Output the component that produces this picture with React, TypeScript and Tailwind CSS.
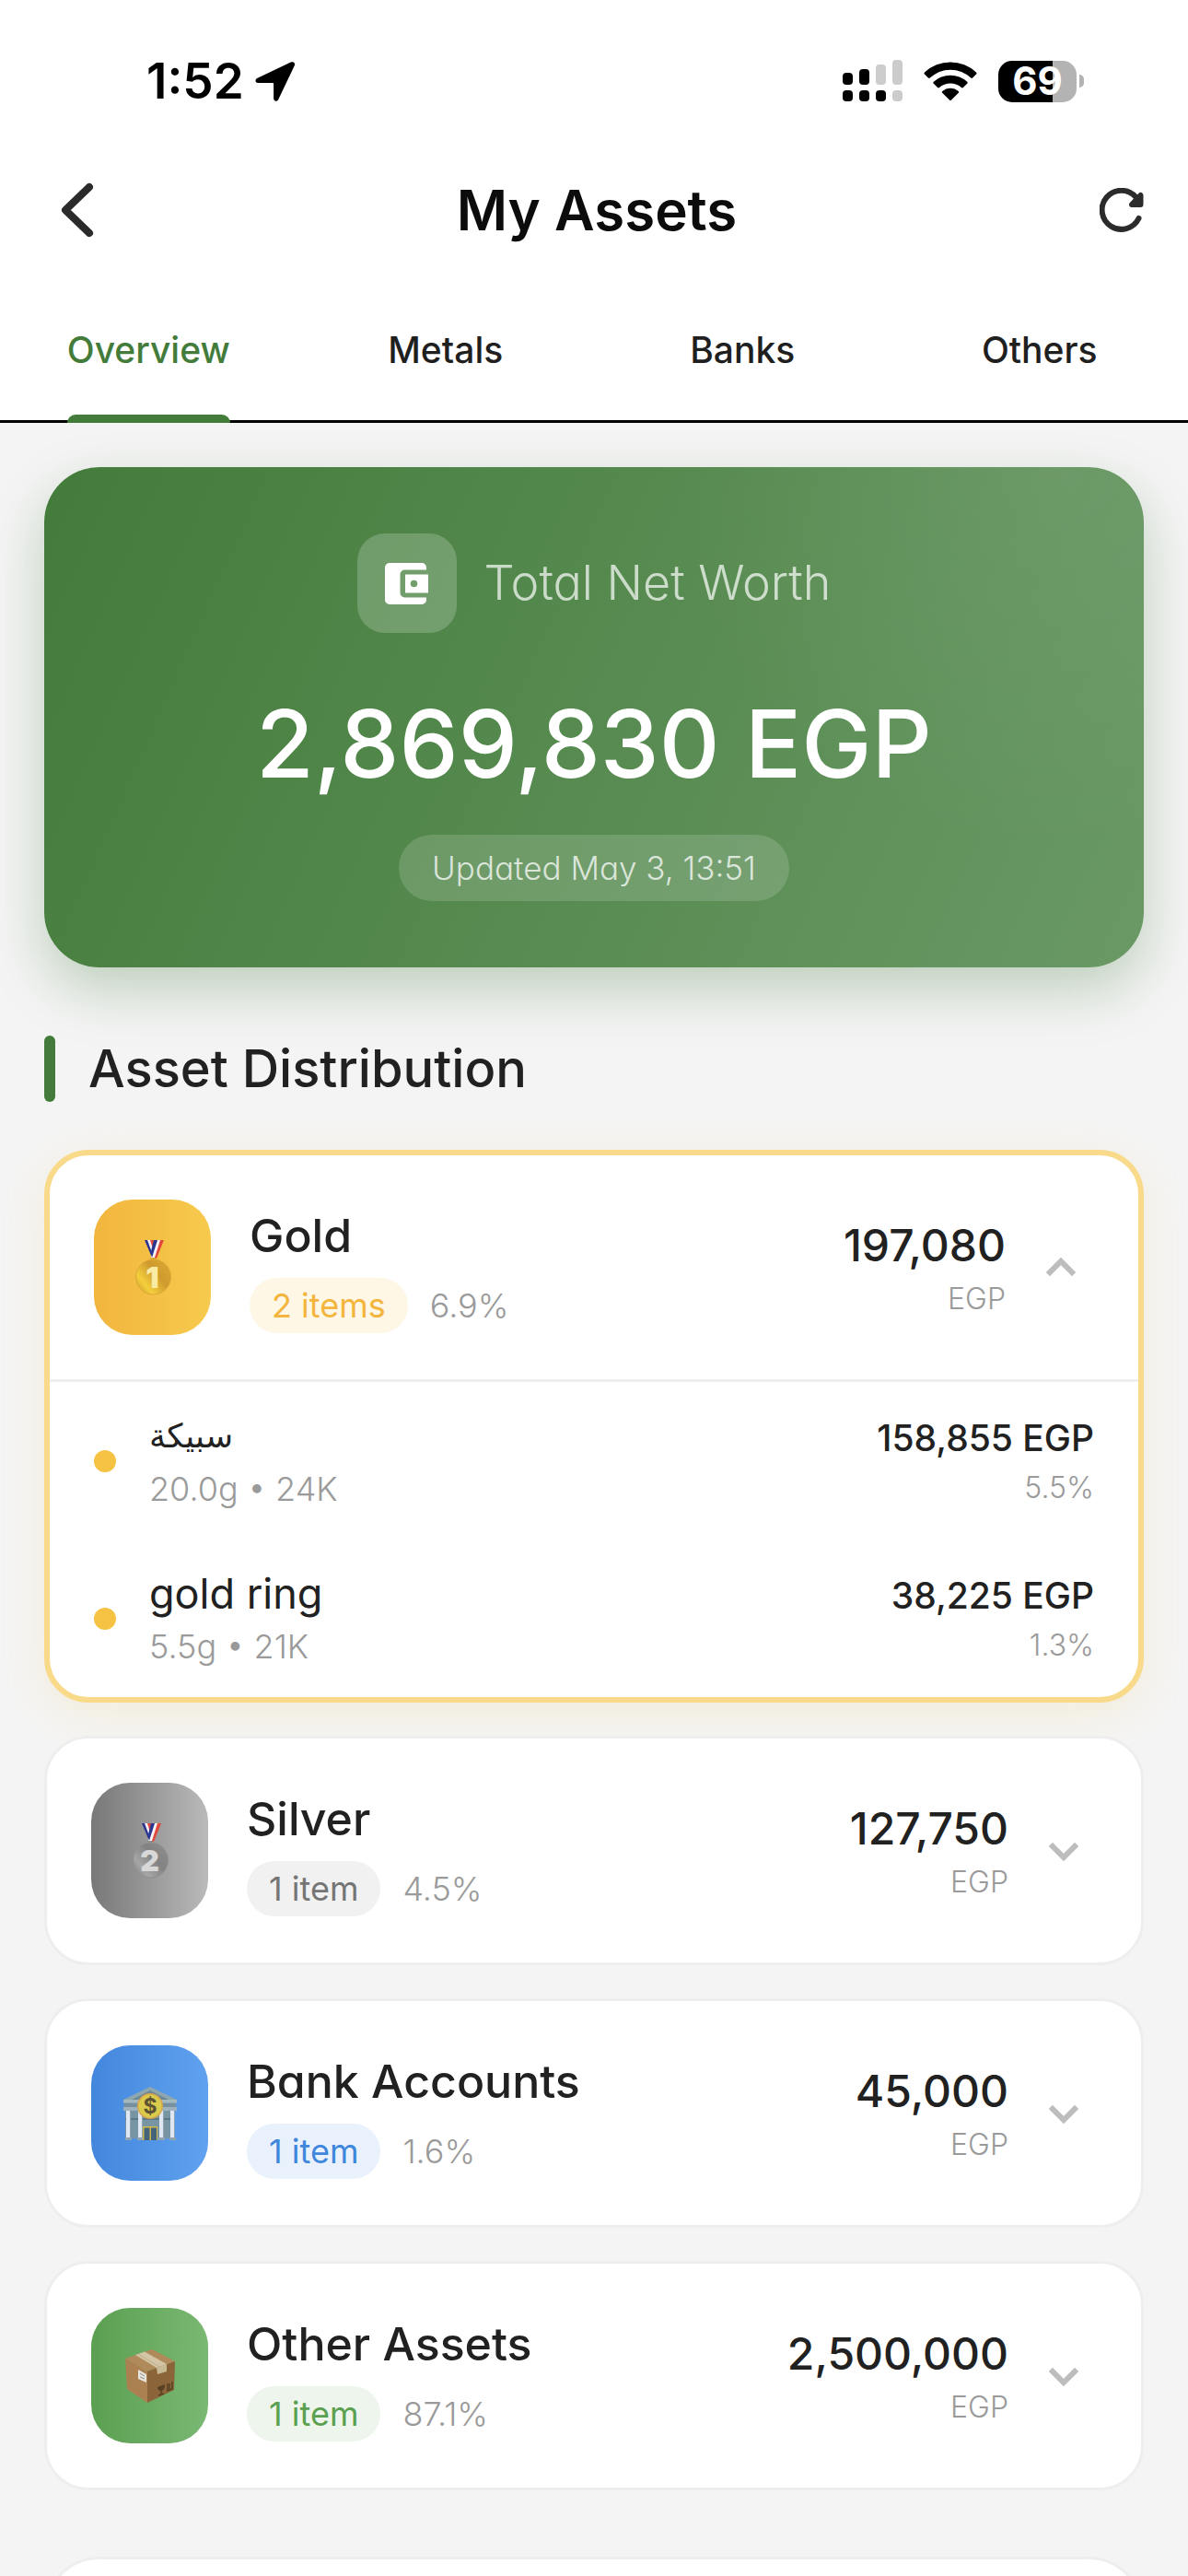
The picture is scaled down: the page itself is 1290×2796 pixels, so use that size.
import type { ReactNode } from "react";

type Holding = { name: string; detail: string; value: string; share: string; arabic?: boolean };
type Asset = {
  name: string;
  count: string;
  share: string;
  value: string;
  tile: string;
  pill: string;
  icon: ReactNode;
  holdings?: Holding[];
};

function Ribbon() {
  return (
    <g>
      <path d="M11 0h6l6 19h-4z" fill="#2a3590" />
      <path d="M14 0h4l5 17-2 2z" fill="#f4f1f4" />
      <path d="M17 0h4l3 11-2 5z" fill="#e2493b" />
      <path d="M32 0h-5l-8 20h5z" fill="#e2493b" />
      <path d="M28 0h-4l-6 19h4z" fill="#f8f5f6" />
      <path d="M25 0h-4l-3 12 1 7z" fill="#2a3590" />
    </g>
  );
}

function Medal({ id, label, light, mid, dark, digit }: { id: string; label: string; light: string; mid: string; dark: string; digit: string }) {
  return (
    <svg viewBox="0 0 40 60" className="h-[60px] w-10" aria-hidden="true">
      <defs>
        <linearGradient id={id} x1="0" y1="0.9" x2="1" y2="0.1">
          <stop offset="0" stopColor={dark} />
          <stop offset="0.25" stopColor={light} />
          <stop offset="0.6" stopColor={dark} />
          <stop offset="1" stopColor={mid} />
        </linearGradient>
      </defs>
      <Ribbon />
      <rect x="17" y="19" width="6" height="4" rx="1" fill={mid} />
      <circle cx="20.500" cy="40" r="19" fill={`url(#${id})`} stroke={mid} strokeWidth="1" />
      <text x="19.500" y="51.500" textAnchor="middle" fontFamily="Inter" fontWeight="900" fontSize="32" fill={digit}>
        {label}
      </text>
    </svg>
  );
}

function BankIcon() {
  return (
    <svg viewBox="0 0 60 60" className="size-[60px]" aria-hidden="true">
      <rect x="3" y="24" width="54" height="33" fill="#7795a3" />
      <rect x="3" y="35" width="54" height="2" fill="#5d7987" />
      <path d="M30 1 59 15v4H1v-4z" fill="#8ea6b0" />
      <path d="M30 5 50 15H10z" fill="#6d8794" />
      <rect x="1" y="15" width="58" height="3" fill="#a4b8c0" />
      <rect x="2" y="19" width="56" height="5" fill="#7690a0" />
      <rect x="1" y="23" width="58" height="4" fill="#9db2bc" />
      {[4, 17, 40, 52].map((x) => (
        <g key={x}>
          <rect x={x} y="27" width="5" height="31" fill="#dfe7f2" />
          <rect x={x + 4} y="27" width="1" height="31" fill="#8fa2b6" />
          <rect x={x - 1} y="56" width="7" height="3" fill="#8fa4b0" />
        </g>
      ))}
      <rect x="22" y="44" width="16" height="15" fill="#d2b94a" />
      <rect x="23.500" y="45.500" width="6" height="13.500" fill="#44647c" />
      <rect x="31" y="45.500" width="6" height="13.500" fill="#44647c" />
      <circle cx="30" cy="22" r="14" fill="#d7a650" />
      <circle cx="30" cy="22" r="12.500" fill="#dbcb4c" />
      <text x="30" y="30" textAnchor="middle" fontFamily="Inter" fontWeight="700" fontSize="23" fill="#5d5335">
        $
      </text>
    </svg>
  );
}

function BoxIcon() {
  return (
    <svg viewBox="0 0 60 60" className="size-[60px]" aria-hidden="true">
      <path d="M3 11 32 1l25 13-30 11z" fill="#b08a5a" />
      <path d="M3 11l24 14v34L5 44z" fill="#ab8152" />
      <path d="M27 25l30-11-1 31-29 14z" fill="#8b6439" />
      <path d="m14 7 10-3.500 24 13.500-11 4z" fill="#d3c5a5" />
      <path d="m17 6 23 14" stroke="#bfae8a" strokeWidth="1" />
      <path d="m37 21 11-4v8l-10 3z" fill="#c8b995" />
      <path d="m17 23 9 5v9l-9-4z" fill="#e6e4dc" />
      <path d="m19 27 5 3m-5 1 5 2" stroke="#8c8f8e" strokeWidth="1" />
      <path d="m38 42 8-3c0 5-2 7-4 7s-4-1-4-4z" fill="#574022" />
      <path d="M42 45v5m-3 1 6-2M49 38v8l5-2v-8m-3 2v6" stroke="#574022" strokeWidth="1.500" fill="none" />
    </svg>
  );
}

const assets: Asset[] = [
  {
    name: "Gold",
    count: "2 items",
    share: "6.9%",
    value: "197,080",
    tile: "from-[#f2b53e] to-[#f6ca4d]",
    pill: "bg-[#fef7e6] text-[#f3b53d]",
    icon: <Medal id="gold" label="1" light="#f4cf3c" mid="#dba935" dark="#cf9a2e" digit="#f9eaa4" />,
    holdings: [
      { name: "سبيكة", detail: "20.0g • 24K", value: "158,855 EGP", share: "5.5%", arabic: true },
      { name: "gold ring", detail: "5.5g • 21K", value: "38,225 EGP", share: "1.3%" },
    ],
  },
  {
    name: "Silver",
    count: "1 item",
    share: "4.5%",
    value: "127,750",
    tile: "from-[#787878] to-[#bababa]",
    pill: "bg-[#f1f1f1] text-[#757575]",
    icon: <Medal id="silver" label="2" light="#a6a6a6" mid="#8f8f8f" dark="#828282" digit="#d8d8d8" />,
  },
  {
    name: "Bank Accounts",
    count: "1 item",
    share: "1.6%",
    value: "45,000",
    tile: "from-[#4387dd] to-[#60a2ef]",
    pill: "bg-[#e9f2fc] text-[#3f86dd]",
    icon: <BankIcon />,
  },
  {
    name: "Other Assets",
    count: "1 item",
    share: "87.1%",
    value: "2,500,000",
    tile: "from-[#5b9f51] to-[#7ab873]",
    pill: "bg-[#edf5ec] text-[#5aa04f]",
    icon: <BoxIcon />,
  },
];

function StatusBar() {
  return (
    <div className="flex h-[156px] items-center justify-between pt-5 pr-[113px] pl-[159px] text-black">
      <div className="flex items-center gap-3">
        <span className="text-[53px] leading-none font-semibold">1:52</span>
        <svg viewBox="0 0 42 42" className="size-11" aria-hidden="true">
          <path d="M37 1.500 2.500 18C-.5 19.500 0 23 3 23h15c.8 0 1.200.4 1.200 1.200V39c0 3.200 3.700 3.700 5 .8L40.800 5c1.200-2.600-1-4.900-3.800-3.500z" />
        </svg>
      </div>
      <div className="flex items-center">
        <svg viewBox="0 0 65 46" className="h-[46px] w-[65px]" aria-hidden="true">
          <g fill="#ccc">
            <rect x="36" y="5" width="11" height="22" rx="4" />
            <rect x="54" width="11" height="27" rx="4" />
            <rect x="54" y="33" width="11" height="12" rx="4" />
          </g>
          <rect y="14" width="11" height="13" rx="4" />
          <rect x="18" y="10" width="11" height="17" rx="4" />
          <rect y="33" width="11" height="12" rx="4" />
          <rect x="18" y="33" width="11" height="12" rx="4" />
          <rect x="36" y="33" width="11" height="12" rx="4" />
        </svg>
        <svg viewBox="0 0 58 43" className="ml-[23px] h-[43px] w-[58px]" aria-hidden="true">
          <path d="M1 11.500a41 41 0 0 1 56 0c.7.700.7 1.300.1 1.900l-4 4.100c-.6.600-1.200.6-1.900 0a32.500 32.500 0 0 0-44.400 0c-.7.600-1.300.6-1.900 0l-4-4.100c-.6-.6-.6-1.200.1-1.900z" />
          <path d="M10.800 21.800a27 27 0 0 1 36.400 0c.7.700.7 1.300 0 1.900l-4.300 4.300c-.6.600-1.200.6-1.900 0a18 18 0 0 0-24 0c-.7.600-1.300.6-1.900 0l-4.300-4.300c-.7-.6-.7-1.200 0-1.900z" />
          <path d="M20.300 32a13 13 0 0 1 17.400 0c.7.700.7 1.200.1 1.800l-8 8c-.6.500-1 .5-1.600 0l-8-8c-.6-.6-.6-1.100.1-1.800z" />
        </svg>
        <div className="ml-[23px] flex items-center gap-[3px]">
          <div className="flex h-[45px] w-[85px] items-center justify-center rounded-[15px] bg-[linear-gradient(90deg,#000_69%,#b3b3b3_69%)] text-[42px] leading-none font-bold text-white">
            69
          </div>
          <div className="h-[14px] w-[5px] rounded-r-full bg-[#b3b3b3]" />
        </div>
      </div>
    </div>
  );
}

function Header() {
  return (
    <div className="flex h-[144px] items-center justify-between pr-12 pl-[66px] text-[#2b2b2b]">
      <button type="button" aria-label="Back">
        <svg viewBox="0 0 36 60" className="h-[60px] w-9" fill="none" stroke="currentColor" strokeWidth="8" strokeLinecap="round" strokeLinejoin="round">
          <path d="M31 5 5 30l26 25" />
        </svg>
      </button>
      <h1 className="text-[60px] leading-none font-semibold text-[#0c0c0c]">My Assets</h1>
      <button type="button" aria-label="Refresh">
        <svg viewBox="0 0 48 48" className="size-12" fill="none" stroke="currentColor" strokeWidth="6" strokeLinecap="round">
          <path d="M42.500 33A21 21 0 1 1 39 9.500l2 2" />
          <path d="M44.500 8v10H35z" strokeLinejoin="round" strokeWidth="6" fill="currentColor" />
        </svg>
      </button>
    </div>
  );
}

function Tabs() {
  return (
    <nav role="tablist" className="grid h-[159px] grid-cols-4 border-b-[3px] border-black text-[39px] font-medium">
      {["Overview", "Metals", "Banks", "Others"].map((tab, i) => (
        <button
          key={tab}
          type="button"
          role="tab"
          aria-selected={i === 0}
          className={
            i === 0
              ? "relative mx-auto flex items-center pt-1 text-[#437c3a] after:absolute after:inset-x-0 after:-bottom-[3px] after:h-[9px] after:rounded-t-[9px] after:bg-[#437c3a]"
              : "mx-auto flex items-center pt-1 text-[#1f1f1f]"
          }
        >
          {tab}
        </button>
      ))}
    </nav>
  );
}

function NetWorth() {
  return (
    <section className="flex flex-col items-center rounded-[60px] bg-[radial-gradient(circle_at_92%_0%,rgba(255,255,255,0.07),transparent_420px),linear-gradient(114deg,#437c3a,#6a9966)] p-[72px] text-white shadow-[0_24px_60px_rgba(67,124,58,0.3)]">
      <div className="flex items-center gap-[30px]">
        <div className="flex size-[108px] items-center justify-center rounded-[30px] bg-white/20">
          <svg viewBox="0 0 47 45" className="h-[45px] w-[47px]" aria-hidden="true">
            <path fill="currentColor" d="M5 0h35a5 5 0 0 1 5 5v2.500H21.500a5 5 0 0 0-5 5v20a5 5 0 0 0 5 5H45V40a5 5 0 0 1-5 5H5a5 5 0 0 1-5-5V5a5 5 0 0 1 5-5z" />
            <path fill="currentColor" fillRule="evenodd" d="M22 12.500h25v20H22zM31.500 18.700a3.800 3.800 0 1 0 0 7.600 3.800 3.800 0 0 0 0-7.600z" />
          </svg>
        </div>
        <h2 className="text-[52px] leading-none font-light text-white/70">Total Net Worth</h2>
      </div>
      <p className="mt-[42px] text-[102px] leading-[156px] font-medium">2,869,830 EGP</p>
      <p className="mt-[21px] rounded-full bg-white/15 px-9 text-[35px] leading-[72px] font-light text-white/75">Updated May 3, 13:51</p>
    </section>
  );
}

function Chevron({ open }: { open: boolean }) {
  return (
    <svg viewBox="0 0 72 72" className={open ? "size-[72px] rotate-180" : "size-[72px]"} fill="none" stroke="#bdbdbd" strokeWidth="6" strokeLinecap="square" aria-hidden="true">
      <path d="m24 31 12 12 12-12" />
    </svg>
  );
}

function AssetCard({ asset }: { asset: Asset }) {
  const open = Boolean(asset.holdings);
  return (
    <article
      className={
        open
          ? "rounded-[48px] border-[6px] border-[#f8da8a] bg-white shadow-[0_12px_48px_rgba(246,202,77,0.15)]"
          : "rounded-[48px] border-[3px] border-[#eee] bg-white"
      }
    >
      <button type="button" aria-expanded={open} className="flex w-full items-center p-12 text-left">
        <span className={`flex h-[147px] w-[127px] items-center justify-center rounded-[42px] bg-linear-to-r ${asset.tile}`}>{asset.icon}</span>
        <span className="ml-[42px] flex flex-col gap-2.5">
          <span className="text-[50px] leading-[72px] font-medium">{asset.name}</span>
          <span className="flex items-center gap-6">
            <span className={`rounded-full px-6 text-[36px] leading-[60px] ${asset.pill}`}>{asset.count}</span>
            <span className="text-[36px] leading-none font-light text-[#9a9a9a]">{asset.share}</span>
          </span>
        </span>
        <span className="mr-6 ml-auto flex flex-col text-right">
          <span className="text-[48px] leading-[69px] font-medium">{asset.value}</span>
          <span className="text-[32px] leading-[48px] font-light text-[#9a9a9a]">EGP</span>
        </span>
        <Chevron open={open} />
      </button>
      {asset.holdings && (
        <ul className="border-t-[3px] border-[#eee]">
          {asset.holdings.map((h) => (
            <li key={h.name} className="flex h-[171px] items-center px-12">
              <span className="size-6 rounded-full bg-[#f5c244]" />
              <div className="ml-9">
                <p className={h.arabic ? "font-['DejaVu_Sans',sans-serif] text-[36px] leading-[60px]" : "text-[45px] leading-[60px]"}>{h.name}</p>
                <p className="text-[36px] leading-[54px] font-light text-[#9a9a9a]">{h.detail}</p>
              </div>
              <div className="ml-auto text-right">
                <p className="text-[39px] leading-[57px] font-medium">{h.value}</p>
                <p className="text-[32px] leading-[51px] font-light text-[#9a9a9a]">{h.share}</p>
              </div>
            </li>
          ))}
        </ul>
      )}
    </article>
  );
}

export default function App() {
  return (
    <div className="h-screen overflow-hidden bg-[#f4f4f4] font-['Inter',sans-serif] text-[#212121]">
      <header className="bg-white">
        <StatusBar />
        <Header />
        <Tabs />
      </header>
      <main className="px-12 pt-12 [font-feature-settings:'cv11']">
        <NetWorth />
        <div className="mt-[70px] mb-12 flex items-center gap-9">
          <span className="h-[72px] w-3 rounded-full bg-[#437c3a]" />
          <h2 className="text-[56px] leading-[80px] font-medium">Asset Distribution</h2>
        </div>
        <div className="flex flex-col gap-9">
          {assets.map((a) => (
            <AssetCard key={a.name} asset={a} />
          ))}
        </div>
        <section className="mt-[72px] h-72 rounded-[60px] border-[3px] border-[#eee] bg-white" />
      </main>
    </div>
  );
}
